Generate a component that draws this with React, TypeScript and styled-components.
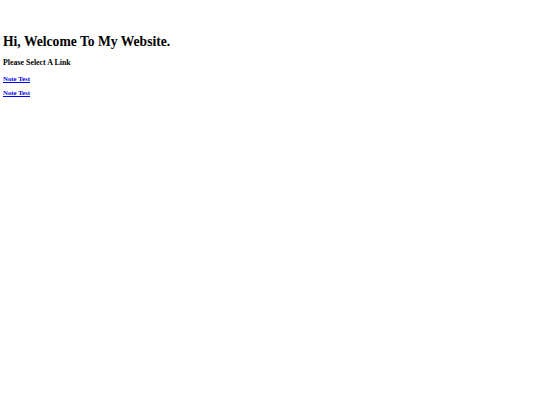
import styled, { createGlobalStyle } from 'styled-components';

const GlobalStyle = createGlobalStyle`
  body {
    margin: 0;
    background: #ffffff;
    font-family: "Liberation Serif", "Times New Roman", serif;
    color: #000000;
  }
`;

const links = ['Note Test', 'Note Test'];

export default function App() {
  return (
    <>
      <GlobalStyle />
      <Page>
        <Title>Hi, Welcome To My Website.</Title>
        <Subtitle>Please Select A Link</Subtitle>
        <LinkList>
          {links.map((item, i) => (
            <LinkItem key={i}>
              <a href="#">{item}</a>
            </LinkItem>
          ))}
        </LinkList>
      </Page>
    </>
  );
}

const Page = styled.div`
  display: flex;
  flex-direction: column;
  padding: 34px 3px 0;
`;

const Title = styled.h1`
  margin: 0;
  font-size: 13.6px;
  line-height: 16px;
  font-weight: bold;
`;

const Subtitle = styled.h3`
  margin: 8px 0 0;
  font-size: 7.9px;
  line-height: 10px;
  font-weight: bold;
`;

const LinkList = styled.div`
  display: flex;
  flex-direction: column;
  gap: 6px;
  margin-top: 7px;
`;

const LinkItem = styled.h4`
  margin: 0;
  font-size: 6.8px;
  line-height: 8px;
  font-weight: bold;

  a {
    color: #0000ee;
    text-decoration: underline;
  }
`;
